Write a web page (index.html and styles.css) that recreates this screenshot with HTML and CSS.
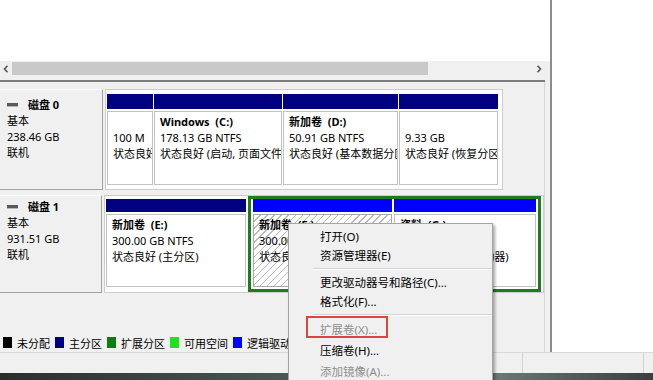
FILE: index.html
```html
<!DOCTYPE html>
<html lang="zh-CN">
<head>
<meta charset="UTF-8" />
<meta name="viewport" content="width=device-width, initial-scale=1" />
<title>磁盘管理</title>
<link rel="stylesheet" href="styles.css">
</head>
<body>
<div class="screen">
  <div class="main">
    <div class="pane">
      <div class="listView"></div>

      <div class="hScroll">
        <span class="arrow">
          <svg width="6" height="8" viewBox="0 0 6 8"><path d="M4.5 0.8 L1.5 4 L4.5 7.2" fill="none" stroke="#555" stroke-width="1.6"/></svg>
        </span>
        <div class="track"><div class="thumb"></div></div>
        <span class="arrow">
          <svg width="6" height="8" viewBox="0 0 6 8"><path d="M1.5 0.8 L4.5 4 L1.5 7.2" fill="none" stroke="#555" stroke-width="1.6"/></svg>
        </span>
      </div>
      <div class="splitter"></div>

      <div class="graph">
        <!-- disk 0 -->
        <div class="disk disk0">
          <div class="diskLabel">
            <div class="diskName"><span class="diskIco"></span>磁盘 0</div>
            <div>基本</div>
            <div>238.46 GB</div>
            <div>联机</div>
          </div>
          <div class="parts">
            <div class="part p100">
              <div class="bar"></div>
              <div class="body"><div class="title">&nbsp;</div><div>100 M</div><div>状态良好 (EFI 系统分区)</div></div>
            </div>
            <div class="part pWin">
              <div class="bar"></div>
              <div class="body"><div class="title">Windows&nbsp; (C:)</div><div>178.13 GB NTFS</div><div>状态良好 (启动, 页面文件, 故障转储)</div></div>
            </div>
            <div class="part pD">
              <div class="bar"></div>
              <div class="body"><div class="title">新加卷&nbsp; (D:)</div><div>50.91 GB NTFS</div><div>状态良好 (基本数据分区)</div></div>
            </div>
            <div class="part pRec">
              <div class="bar"></div>
              <div class="body"><div class="title">&nbsp;</div><div>9.33 GB</div><div>状态良好 (恢复分区)</div></div>
            </div>
          </div>
        </div>

        <!-- disk 1 -->
        <div class="disk disk1">
          <div class="diskLabel">
            <div class="diskName"><span class="diskIco"></span>磁盘 1</div>
            <div>基本</div>
            <div>931.51 GB</div>
            <div>联机</div>
          </div>
          <div class="parts">
            <div class="part pE">
              <div class="bar"></div>
              <div class="body"><div class="title">新加卷&nbsp; (E:)</div><div>300.00 GB NTFS</div><div>状态良好 (主分区)</div></div>
            </div>
            <div class="extended">
              <div class="part pF">
                <div class="bar logical"></div>
                <div class="body hatched"><div class="title">新加卷&nbsp; (F:)</div><div>300.00 GB NTFS</div><div>状态良好 (逻辑驱动器)</div></div>
              </div>
              <div class="part pG">
                <div class="bar logical"></div>
                <div class="body"><div class="title">资料&nbsp; (G:)</div><div>331.51 GB NTFS</div><div>状态良好 (逻辑驱动器)</div></div>
              </div>
            </div>
          </div>
        </div>

        <div class="legend">
          <span class="key kUnalloc"></span><span class="keyText">未分配</span>
          <span class="key kPrimary"></span><span class="keyText">主分区</span>
          <span class="key kExtended"></span><span class="keyText">扩展分区</span>
          <span class="key kFree"></span><span class="keyText">可用空间</span>
          <span class="key kLogical"></span><span class="keyText">逻辑驱动器</span>
        </div>
      </div>
    </div>
    <div class="side"></div>
  </div>

  <div class="status">
    <span class="cell cellMain"></span>
    <span class="cell cellMid"></span>
    <span class="cell"></span>
  </div>
  <div class="desk"></div>

  <!-- context menu over the hatched volume -->
  <div class="menu">
    <div class="item">打开(O)</div>
    <div class="item">资源管理器(E)</div>
    <div class="sep"></div>
    <div class="item">更改驱动器号和路径(C)...</div>
    <div class="item">格式化(F)...</div>
    <div class="sep"></div>
    <div class="item tall off">扩展卷(X)...</div>
    <div class="item tall">压缩卷(H)...</div>
    <div class="item tall off">添加镜像(A)...</div>
    <div class="mark"></div>
  </div>
</div>
</body>
</html>
```

FILE: styles.css
```css
body {
  margin: 0;
  overflow: hidden;
  font-family: "Noto Sans", "Noto Sans CJK SC", sans-serif;
  font-size: 11px;
  color: #000;
}

.screen {
  position: relative;
  width: 653px;
  height: 380px;
  overflow: hidden;
  display: flex;
  flex-direction: column;
  background: #f0f0f0;
}

.main {
  display: flex;
  height: 352px;
}

.pane {
  width: 550px;
  display: flex;
  flex-direction: column;
  border-right: 2px solid #8c8c8c;
  background: #f0f0f0;
}

.side {
  flex: 1;
  background: #fff;
}

.listView {
  height: 61px;
  background: #fff;
}

/* horizontal scrollbar */
.hScroll {
  height: 15px;
  margin-right: 5px;
  display: flex;
  align-items: stretch;
  background: #f0f0f0;
}

.arrow {
  width: 12px;
  display: flex;
  align-items: center;
  justify-content: center;
}

.track {
  flex: 1;
  display: flex;
  padding: 1px 0;
}

.thumb {
  width: 416px;
  background: #c9c9c9;
}

.splitter {
  height: 4px;
  margin-right: 5px;
  border-bottom: 2px solid #7d7d7d;
}

/* graphical view */
.graph {
  flex: 1;
  width: 545px;
  display: flex;
  flex-direction: column;
  padding-top: 7px;
  box-sizing: border-box;
  border-right: 1px solid #d6d6d6;
}

.disk {
  display: flex;
}

.disk0 {
  height: 101px;
}

.disk1 {
  height: 98px;
  margin-top: 5px;
}

.diskLabel {
  width: 103px;
  box-sizing: border-box;
  padding: 7px 0 0 7px;
  line-height: 16px;
  background: #f0f0f0;
  border-top: 1px solid #fafafa;
  border-right: 1px solid #a3a3a3;
  border-bottom: 1px solid #a3a3a3;
  margin-right: 2px;
}

.disk1 .diskLabel {
  padding-top: 3px;
}

.diskName {
  font-weight: bold;
  display: flex;
  align-items: center;
}

.diskIco {
  width: 11px;
  height: 3px;
  background: #5a5a5a;
  border-bottom: 1px solid #b5b5b5;
  margin-right: 10px;
}

.parts {
  display: flex;
  gap: 1px;
  box-sizing: border-box;
  background: #fff;
  border: 1px solid #cdcdcd;
  padding: 4px 4px 4px 1px;
}

.disk0 .parts {
  width: 398px;
}

.disk1 .parts {
  width: 440px;
  padding: 3px 2px 5px 1px;
}

.part {
  display: flex;
  flex-direction: column;
  min-width: 0;
}

.p100 { width: 46px; }
.pWin { width: 128px; }
.pD { width: 115px; }
.pRec { width: 99px; }
.pE { width: 142px; }
.pF { width: 139px; }
.pG { width: 142px; }

.bar {
  height: 15px;
  background: #000080;
  flex-shrink: 0;
}

.disk1 .bar {
  height: 13px;
}

.bar.logical {
  background: #0000ff;
}

.body {
  flex: 1;
  margin-top: 2px;
  border: 1px solid #c2c2c2;
  background: #fff;
  padding: 2px 3px 0 5px;
  line-height: 16px;
  white-space: nowrap;
  overflow: hidden;
}

.title {
  font-weight: bold;
}

.hatched {
  background: repeating-linear-gradient(135deg, #fff 0 4px, #b9b9b9 4px 5px);
  border-color: #a9a9a9;
}

.extended {
  display: flex;
  gap: 2px;
  margin: -3px 0 -5px 1px;
  padding: 0 2px 2px 2px;
  border: 3px solid #1d7d1d;
  background: #fff;
}

/* legend */
.legend {
  margin-top: auto;
  margin-bottom: 3px;
  height: 13px;
  padding-left: 3px;
  display: flex;
  align-items: center;
  white-space: nowrap;
}

.key {
  width: 9px;
  height: 11px;
  margin-right: 5px;
  flex-shrink: 0;
}

.keyText {
  margin-right: 5px;
}

.kUnalloc { background: #000; }
.kPrimary { background: #000080; }
.kExtended { background: #0d7d0d; }
.kFree { background: #20e020; }
.kLogical { background: #0000ff; }

/* status bar + desktop edge */
.status {
  height: 21px;
  display: flex;
  box-sizing: border-box;
  border-top: 1px solid #d9d9d9;
  background: #f0f0f0;
}

.cell {
  flex: 1;
  border-left: 1px solid #d2d2d2;
}

.cellMain {
  flex: 0 0 522px;
  border-left: none;
}

.cellMid {
  flex: 0 0 120px;
}

.desk {
  flex: 1;
  background: linear-gradient(90deg, #2c2d2b 0%, #3c4644 25%, #52625f 55%, #6b7b77 75%, #3a3f3e 100%);
}

/* context menu */
.menu {
  position: absolute;
  left: 288px;
  top: 223px;
  width: 205px;
  height: 170px;
  box-sizing: border-box;
  padding: 3px 0;
  background: #f0f0f0;
  border: 1px solid #a5a5a5;
  box-shadow: 2px 2px 3px rgba(0, 0, 0, 0.35);
  font-size: 11.5px;
}

.item {
  height: 19px;
  line-height: 19px;
  padding-left: 31px;
  white-space: nowrap;
}

.item.tall {
  height: 21px;
  line-height: 21px;
}

.item.off {
  color: #8e8e8e;
}

.sep {
  height: 8px;
  margin-left: 24px;
  box-sizing: border-box;
  border-bottom: 4px solid transparent;
  position: relative;
}

.sep::after {
  content: "";
  position: absolute;
  left: 0;
  right: 0;
  top: 3px;
  border-top: 1px solid #d3d3d3;
  border-bottom: 1px solid #fff;
}

.mark {
  position: absolute;
  left: 17px;
  top: 92px;
  width: 82px;
  height: 22px;
  box-sizing: border-box;
  border: 2px solid #d8463c;
}
```
